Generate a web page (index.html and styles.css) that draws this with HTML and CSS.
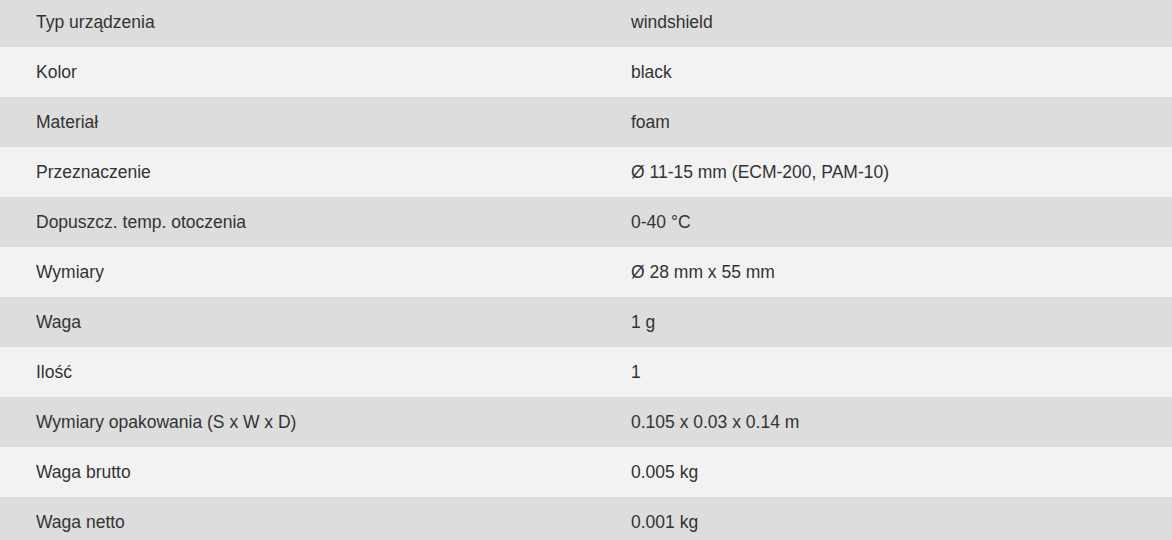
FILE: index.html
```html
<!DOCTYPE html>
<html lang="pl">
<head>
<meta charset="utf-8">
<link rel="stylesheet" href="styles.css">
</head>
<body>
<div class="specs">
  <div class="row"><div class="cell">Typ urządzenia</div><div class="cell">windshield</div></div>
  <div class="row"><div class="cell">Kolor</div><div class="cell">black</div></div>
  <div class="row"><div class="cell">Materiał</div><div class="cell">foam</div></div>
  <div class="row"><div class="cell">Przeznaczenie</div><div class="cell">Ø 11-15 mm (ECM-200, PAM-10)</div></div>
  <div class="row"><div class="cell">Dopuszcz. temp. otoczenia</div><div class="cell">0-40 °C</div></div>
  <div class="row"><div class="cell">Wymiary</div><div class="cell">Ø 28 mm x 55 mm</div></div>
  <div class="row"><div class="cell">Waga</div><div class="cell">1 g</div></div>
  <div class="row"><div class="cell">Ilość</div><div class="cell">1</div></div>
  <div class="row"><div class="cell">Wymiary opakowania (S x W x D)</div><div class="cell">0.105 x 0.03 x 0.14 m</div></div>
  <div class="row"><div class="cell">Waga brutto</div><div class="cell">0.005 kg</div></div>
  <div class="row"><div class="cell">Waga netto</div><div class="cell">0.001 kg</div></div>
</div>
</body>
</html>
```

FILE: styles.css
```css
html, body {
  margin: 0;
  padding: 0;
  background: #f2f2f2;
}
body {
  font-family: "Liberation Sans", Arial, sans-serif;
  font-size: 17.5px;
  color: #333333;
  overflow: hidden;
}
.specs {
  margin-top: -3px;
}
.row {
  display: grid;
  grid-template-columns: 595px 1fr;
  height: 50px;
  align-items: center;
}
.row:nth-child(odd) {
  background: #dddddd;
}
.row:nth-child(even) {
  background: #f2f2f2;
}
.cell {
  padding-left: 36px;
  line-height: 20px;
}
```
